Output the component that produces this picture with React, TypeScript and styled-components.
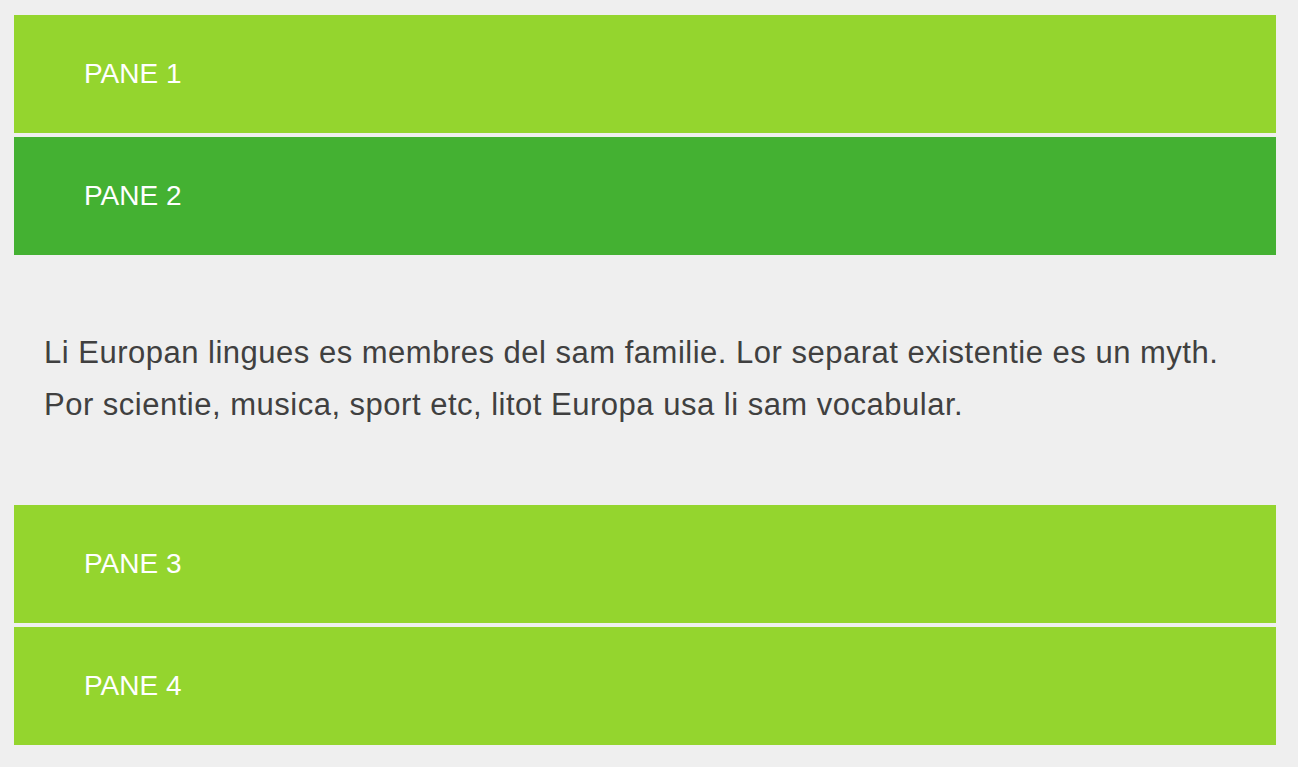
import { useState } from 'react';
import styled, { createGlobalStyle } from 'styled-components';

const GlobalStyle = createGlobalStyle`
  body {
    margin: 0;
    background: #efefef;
    font-family: "Liberation Sans", Arial, Helvetica, sans-serif;
  }
`;

const Accordion = styled.div`
  display: flex;
  flex-direction: column;
  gap: 4px;
  padding: 15px 22px 20px 14px;
`;

const PaneHeader = styled.button<{ $active: boolean }>`
  display: flex;
  align-items: center;
  width: 100%;
  height: 118px;
  padding: 0 0 0 70px;
  border: 0;
  background: ${({ $active }) => ($active ? '#44b132' : '#94d52e')};
  color: #fff;
  font-family: inherit;
  font-size: 28px;
  text-align: left;
  cursor: pointer;
`;

const PaneBody = styled.div`
  padding: 72px 30px 70px;
  color: #404040;
  font-size: 31px;
  line-height: 52px;
  letter-spacing: 0.5px;
`;

const panes = [
  { title: 'PANE 1', text: '' },
  {
    title: 'PANE 2',
    text: 'Li Europan lingues es membres del sam familie. Lor separat existentie es un myth. Por scientie, musica, sport etc, litot Europa usa li sam vocabular.',
  },
  { title: 'PANE 3', text: '' },
  { title: 'PANE 4', text: '' },
];

export default function App() {
  const [open, setOpen] = useState(1);

  return (
    <>
      <GlobalStyle />
      <Accordion>
        {panes.map((pane, index) => (
          <div key={pane.title}>
            <PaneHeader
              $active={open === index}
              onClick={() => setOpen(open === index ? -1 : index)}
            >
              {pane.title}
            </PaneHeader>
            {open === index && <PaneBody>{pane.text}</PaneBody>}
          </div>
        ))}
      </Accordion>
    </>
  );
}
